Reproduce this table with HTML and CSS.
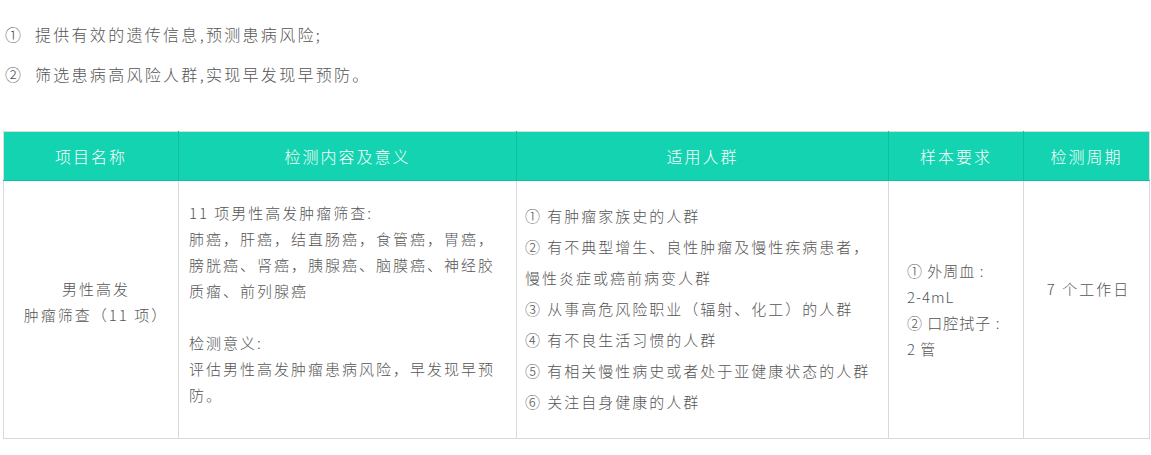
FILE: index.html
```html
<!DOCTYPE html>
<html lang="zh">
<head>
<meta charset="utf-8">
<link rel="stylesheet" href="styles.css">
</head>
<body>
<div class="intro">
  <p>①&nbsp; 提供有效的遗传信息,预测患病风险;</p>
  <p>②&nbsp; 筛选患病高风险人群,实现早发现早预防。</p>
</div>
<table class="tbl">
  <colgroup>
    <col class="c1"><col class="c2"><col class="c3"><col class="c4"><col class="c5">
  </colgroup>
  <thead>
    <tr>
      <th>项目名称</th>
      <th>检测内容及意义</th>
      <th>适用人群</th>
      <th>样本要求</th>
      <th>检测周期</th>
    </tr>
  </thead>
  <tbody>
    <tr>
      <td class="name">男性高发<br>肿瘤筛查（11 项）</td>
      <td class="content">11 项男性高发肿瘤筛查:<br>肺癌，肝癌，结直肠癌，食管癌，胃癌，<br>膀胱癌、肾癌，胰腺癌、脑膜癌、神经胶<br>质瘤、前列腺癌<br><br>检测意义:<br>评估男性高发肿瘤患病风险，早发现早预<br>防。</td>
      <td class="people">
        <p>① 有肿瘤家族史的人群</p>
        <p>② 有不典型增生、良性肿瘤及慢性疾病患者，</p>
        <p>慢性炎症或癌前病变人群</p>
        <p>③ 从事高危风险职业（辐射、化工）的人群</p>
        <p>④ 有不良生活习惯的人群</p>
        <p>⑤ 有相关慢性病史或者处于亚健康状态的人群</p>
        <p>⑥ 关注自身健康的人群</p>
      </td>
      <td class="sample">① 外周血 :<br>2-4mL<br>② 口腔拭子 :<br>2 管</td>
      <td class="period">7 个工作日</td>
    </tr>
  </tbody>
</table>
</body>
</html>
```
FILE: styles.css
```css
html, body {
  margin: 0;
  padding: 0;
  background: #fff;
}
body {
  font-family: "Noto Sans CJK SC", "Noto Sans", sans-serif;
  font-weight: 300;
  color: #555;
}
.intro {
  padding: 14px 0 0 5px;
  height: 131px;
  box-sizing: border-box;
}
.intro p {
  margin: 0;
  font-size: 16px;
  line-height: 40px;
  letter-spacing: 2.3px;
}
.tbl {
  margin-left: 3px;
  width: 1146px;
  border-collapse: collapse;
  table-layout: fixed;
  font-size: 15px;
  letter-spacing: 2px;
}
.c1 { width: 175px; }
.c2 { width: 338px; }
.c3 { width: 372px; }
.c4 { width: 135px; }
.c5 { width: 126px; }
.tbl th {
  background: #13d3b0;
  color: #fff;
  font-weight: 300;
  height: 48px;
  padding: 0;
  border: 1px solid #0fbf9f;
  border-top-color: #dcdcdc;
  text-align: center;
  font-size: 16px;
}
.tbl th:first-child { border-left-color: #dcdcdc; }
.tbl th:last-child { border-right-color: #dcdcdc; }
.tbl tbody tr {
  height: 258px;
}
.tbl td {
  border: 1px solid #d9d9d9;
  vertical-align: middle;
  line-height: 26px;
  padding: 0 10px;
}
.tbl td.name {
  text-align: center;
  padding-left: 15px;
  padding-right: 5px;
  padding-bottom: 16px;
}
.tbl td.content {
  padding-left: 10px;
  padding-bottom: 12px;
}
.tbl td.people {
  padding-left: 8px;
  padding-right: 0;
  padding-bottom: 2px;
}
.people p {
  margin: 0;
  line-height: 31px;
  white-space: nowrap;
}
.tbl td.sample {
  padding-left: 18px;
  letter-spacing: 1px;
  white-space: nowrap;
  padding-bottom: 0;
}
.tbl td.period {
  text-align: center;
  padding-left: 12px;
  padding-right: 8px;
  padding-bottom: 42px;
}
```
